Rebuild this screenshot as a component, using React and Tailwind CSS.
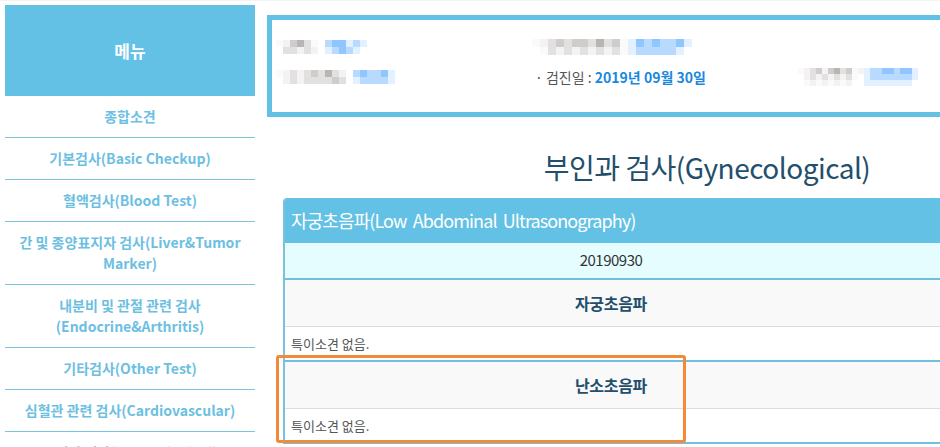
import React from "react";

const C = {
  w: "#f4f2f2",
  g: "#e3e0e0",
  G: "#cfcccc",
  D: "#b8b5b5",
  x: "#fafafa",
  l: "#e2f0ff",
  b: "#b9daff",
  B: "#8fc6ff",
  n: "#ffffff",
};

function Mosaic({ rows, cell = 7 }) {
  return (
    <div className="inline-flex flex-col align-middle blur-[0.6px]">
      {rows.map((r, i) => (
        <div key={i} className="flex">
          {r.split("").map((ch, j) => (
            <div key={j} style={{ width: cell, height: cell, background: C[ch] }} />
          ))}
        </div>
      ))}
    </div>
  );
}

const menu = [
  ["종합소견"],
  ["기본검사(Basic Checkup)"],
  ["혈액검사(Blood Test)"],
  ["간 및 종양표지자 검사(Liver&Tumor", "Marker)"],
  ["내분비 및 관절 관련 검사", "(Endocrine&Arthritis)"],
  ["기타검사(Other Test)"],
  ["심혈관 관련 검사(Cardiovascular)"],
  ["부인과 검사(Gynecological)"],
];

export default function App() {
  const font = { fontFamily: '"Noto Sans CJK KR", "Noto Sans", sans-serif' };
  return (
    <div className="relative w-[940px] h-[447px] overflow-hidden bg-white flex" style={font}>
      <div className="absolute left-0 top-0 w-full h-px bg-[#f3f3f3]" />
      {/* Sidebar */}
      <div className="ml-[5px] mt-[5px] w-[250px] shrink-0">
        <div className="h-[91px] bg-[#62c1e5] flex items-center justify-center text-white font-bold text-[17px]">
          메뉴
        </div>
        {menu.map((lines, i) => (
          <div
            key={i}
            className="py-[10px] border-b border-[#7ec4dc] text-center text-[14px] leading-[21px] font-bold text-[#6dbfe2]"
          >
            {lines.map((l, j) => (
              <div key={j} className="whitespace-nowrap">{l}</div>
            ))}
          </div>
        ))}
      </div>

      {/* Main */}
      <div className="ml-[12px] mt-[15px] w-[880px] shrink-0">
        <div className="h-[102px] border-[5px] border-[#62c1e5] pt-[12px] pl-[4px]">
          <div className="grid grid-cols-[256px_261px_1fr] grid-rows-[30px_30px] items-center">
            <div className="flex items-center">
              <Mosaic rows={["xwGDgxnbBBlbl", "nggwgwnlbBbln"]} cell={7} />
            </div>
            <div className="flex items-center">
              <Mosaic rows={["xwgGgGGgDgGxlBbBbbBl", "nxgwgwgwgwgxlbbbbbln"]} cell={8} />
            </div>
            <div />
            <div className="flex items-center">
              <Mosaic rows={["xwgwgGgDgwnbBbbBl", "nwgwggggGgnlbbbbl"]} cell={7} />
            </div>
            <div className="text-[14px] text-[#555] pl-[3px] whitespace-nowrap">
              · 검진일 : <span className="font-bold text-[#1a88dc]">2019년 09월 30일</span>
            </div>
            <div className="flex items-center pl-[5px]">
              <Mosaic rows={["xwgGwGDgGxwlbbBBbBBl", "nwgwgwgwgxnlbbbbbbbl", "nxwxwxwxwnnlllllllln"]} cell={6} />
            </div>
          </div>
        </div>

        <div className="mt-[30px] mb-[11px] h-[40px] leading-[40px] text-center text-[28px] text-[#234f6c] tracking-[-0.5px]">
          부인과 검사(Gynecological)
        </div>

        <div className="ml-[16px] w-[848px] rounded-t-[4px] overflow-hidden border-l-2 border-[#78c2dd]">
          <div className="h-[45px] bg-[#62c1e5] flex items-center pl-[6px] text-white text-[18px] tracking-[-0.9px] [word-spacing:3px]">
            자궁초음파(Low Abdominal Ultrasonography)
          </div>
          <div className="h-[37px] bg-[#e5fdfe] border-b-2 border-[#6ec0dc]">
            <div className="w-[652px] h-[35px] flex items-center justify-center text-[15px] tracking-[-0.5px] text-[#333]">20190930</div>
          </div>
          {["자궁초음파", "난소초음파"].map((t) => (
            <div key={t}>
              <div className="h-[47px] bg-[#f9f9f9] border-b border-[#dddddd]">
                <div className="w-[652px] h-[46px] flex items-center justify-center text-[16px] tracking-[-0.3px] font-bold text-[#234f6c]">
                  {t}
                </div>
              </div>
              <div className="h-[35px] bg-white border-b-2 border-[#6ec0dc] pl-[6px] pt-[8px] text-[13px] leading-[18px] text-[#555]">
                특이소견 없음.
              </div>
            </div>
          ))}
        </div>
      </div>

      {/* annotation */}
      <div className="absolute left-[276px] top-[355px] w-[410px] h-[88px] border-[3px] border-[#f28a3a] rounded-[3px]" />
    </div>
  );
}
